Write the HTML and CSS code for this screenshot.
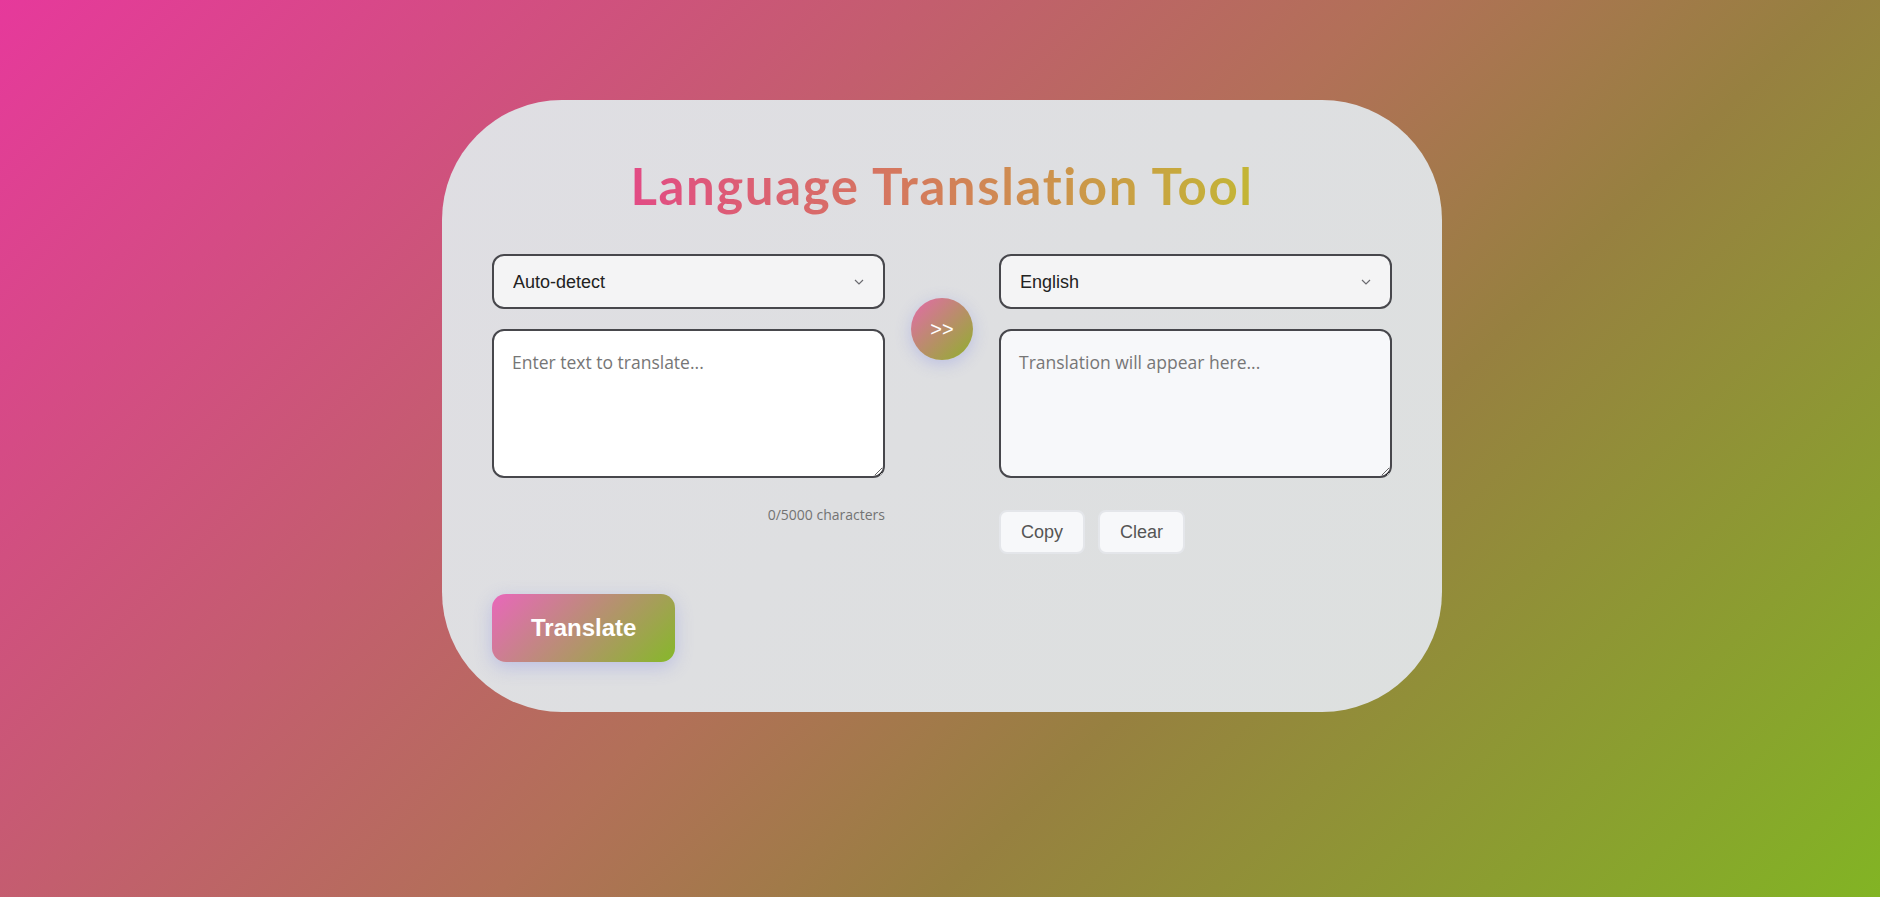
FILE: index.html
```html
<!DOCTYPE html>
<html lang="en">
<head>
<meta charset="utf-8">
<title>Language Translation Tool</title>
<link rel="stylesheet" href="styles.css">
</head>
<body>
<main class="card">
  <h1 class="title"><span>Language Translation Tool</span></h1>
  <div class="grid">
    <div class="col">
      <div class="select-wrap">
        <select class="lang">
          <option>Auto-detect</option>
          <option>English</option>
          <option>Spanish</option>
        </select>
        <svg class="chev" width="10" height="6" viewBox="0 0 10 6"><path d="M1 1l4 4 4-4" fill="none" stroke="#6b6b70" stroke-width="1.2"/></svg>
      </div>
      <textarea class="box src" placeholder="Enter text to translate..."></textarea>
      <div class="count">0/5000 characters</div>
    </div>
    <button class="swap">&gt;&gt;</button>
    <div class="col">
      <div class="select-wrap">
        <select class="lang">
          <option>English</option>
          <option>Spanish</option>
        </select>
        <svg class="chev" width="10" height="6" viewBox="0 0 10 6"><path d="M1 1l4 4 4-4" fill="none" stroke="#6b6b70" stroke-width="1.2"/></svg>
      </div>
      <textarea class="box out" placeholder="Translation will appear here..." readonly></textarea>
      <div class="actions">
        <button class="small">Copy</button>
        <button class="small">Clear</button>
      </div>
    </div>
  </div>
  <button class="translate">Translate</button>
</main>
</body>
</html>
```

FILE: styles.css
```css
* { box-sizing: border-box; }

html, body { height: 100%; }

body {
  margin: 0;
  min-height: 100vh;
  padding-top: 100px;
  background: linear-gradient(135deg, #e6399b 0%, #b27058 50%, #978040 66%, #82b424 100%);
  font-family: "Open Sans", "Noto Sans", sans-serif;
  overflow: hidden;
}

.card {
  width: 1000px;
  margin: 0 auto;
  transform: translateX(2px);
  padding: 50px;
  border-radius: 120px;
  background: linear-gradient(135deg, #dfdee3, #dde0df);
  display: flex;
  flex-direction: column;
  align-items: flex-start;
}

.title {
  align-self: stretch;
  text-align: center;
  margin: 6px 0 38px;
  font-family: "Lato", sans-serif;
  font-weight: 700;
  font-size: 51px;
  letter-spacing: 1.6px;
  line-height: 60px;
}

.title span {
  background: linear-gradient(90deg, #e24b85, #d47a5c 45%, #c3b635);
  -webkit-background-clip: text;
  background-clip: text;
  color: transparent;
}

.grid {
  align-self: stretch;
  display: grid;
  grid-template-columns: 1fr 62px 1fr;
  column-gap: 26px;
  align-items: start;
}

.col {
  display: flex;
  flex-direction: column;
}

.select-wrap {
  position: relative;
}

.lang {
  -webkit-appearance: none;
  appearance: none;
  width: 100%;
  height: 55px;
  padding: 0 40px 0 19px;
  border: 2px solid #47474c;
  border-radius: 12px;
  background: #f4f4f5;
  font-family: "Liberation Sans", Arial, sans-serif;
  font-size: 18px;
  color: #222;
  outline: none;
}

.chev {
  position: absolute;
  right: 21px;
  top: 25px;
  pointer-events: none;
}

.box {
  display: block;
  width: 100%;
  height: 149px;
  margin-top: 20px;
  padding: 19px 18px 14px;
  border: 2px solid #47474c;
  border-radius: 12px;
  font-family: "Open Sans", "Noto Sans", sans-serif;
  font-size: 17.5px;
  color: #222;
  outline: none;
  resize: vertical;
}

.box::placeholder { color: #767676; }

.src { background: #ffffff; }
.out { background: #f7f8fa; }

.count {
  margin-top: 27px;
  text-align: right;
  font-size: 14px;
  color: #737373;
}

.swap {
  margin-top: 44px;
  width: 62px;
  height: 62px;
  padding: 0;
  border: none;
  border-radius: 50%;
  background: linear-gradient(135deg, #e46aaa, #8fb02c);
  color: #fff;
  font-family: "Liberation Sans", Arial, sans-serif;
  font-size: 20px;
  box-shadow: 0 4px 16px rgba(110, 120, 230, 0.3);
  cursor: pointer;
}

.actions {
  display: flex;
  gap: 13px;
  margin-top: 32px;
}

.small {
  height: 44px;
  padding: 0 20px;
  border: 2px solid #e4e6ea;
  border-radius: 8px;
  background: #f7f8fa;
  font-family: "Liberation Sans", Arial, sans-serif;
  font-size: 18px;
  color: #555;
  cursor: pointer;
}

.translate {
  margin-top: 40px;
  height: 68px;
  padding: 0 39px;
  border: none;
  border-radius: 14px;
  background: linear-gradient(135deg, #e967bb, #86b82a);
  color: #fff;
  font-family: "Liberation Sans", Arial, sans-serif;
  font-weight: 700;
  font-size: 24px;
  box-shadow: 0 5px 18px rgba(110, 120, 230, 0.3);
  cursor: pointer;
}
```
